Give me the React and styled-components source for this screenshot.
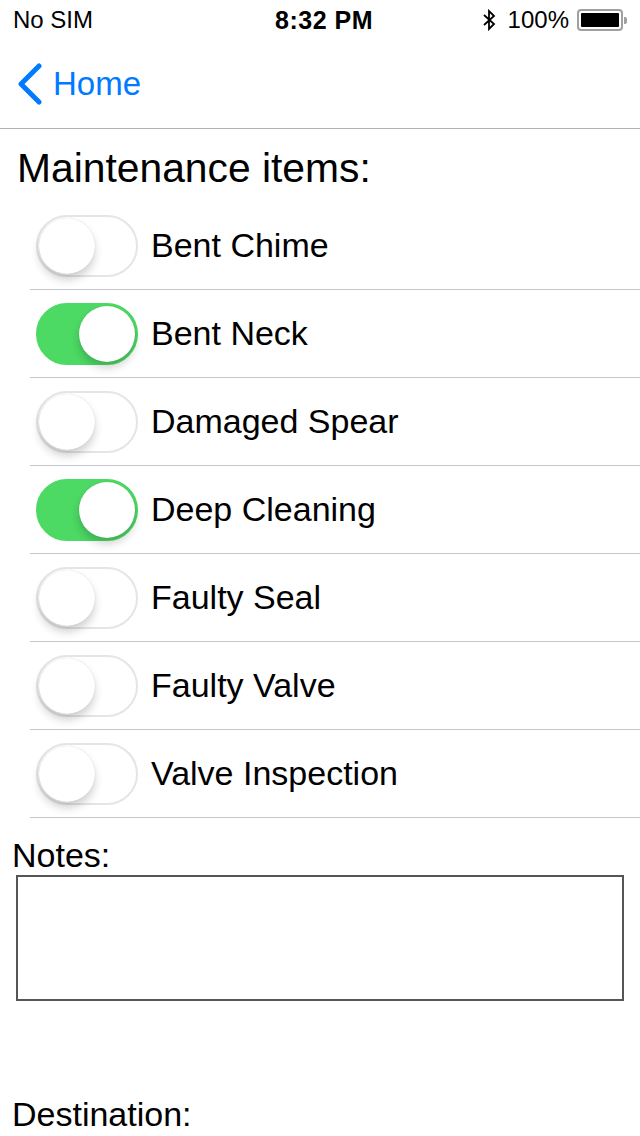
import React, { useState } from 'react';
import styled, { createGlobalStyle } from 'styled-components';

const GlobalStyle = createGlobalStyle`
  html, body {
    margin: 0;
    padding: 0;
    background: #fff;
    font-family: "Liberation Sans", Arial, sans-serif;
    color: #000;
  }
`;

const Screen = styled.div`
  width: 640px;
  height: 1136px;
  overflow: hidden;
  background: #fff;
`;

const StatusBar = styled.div`
  height: 40px;
  padding: 0 13px;
  display: grid;
  grid-template-columns: 1fr auto 1fr;
  align-items: center;
  font-size: 24px;
`;

const Carrier = styled.span``;

const Clock = styled.span`
  font-weight: bold;
  font-size: 25px;
  letter-spacing: 0.5px;
  margin-left: 8px;
`;

const StatusRight = styled.div`
  display: flex;
  align-items: center;
  justify-content: flex-end;
  gap: 8px;
`;

const Percent = styled.span`
  margin-left: 4px;
`;

const Battery = styled.div`
  display: flex;
  align-items: center;
`;

const BatteryBody = styled.div`
  width: 46px;
  height: 22px;
  border: 2px solid #a0a0a0;
  border-radius: 4px;
  padding: 2px;
  box-sizing: border-box;

  &::after {
    content: '';
    display: block;
    width: 100%;
    height: 100%;
    background: #000;
    border-radius: 1px;
  }
`;

const BatteryNub = styled.div`
  width: 3px;
  height: 7px;
  background: #a0a0a0;
  border-radius: 0 2px 2px 0;
  margin-left: 1px;
`;

const NavBar = styled.div`
  height: 88px;
  border-bottom: 1px solid #b2b2b2;
  display: flex;
  align-items: center;
  padding-left: 17px;
`;

const BackButton = styled.button`
  display: flex;
  align-items: center;
  gap: 10px;
  background: none;
  border: none;
  padding: 0;
  color: #007aff;
  font-family: inherit;
  font-size: 33px;
  cursor: pointer;
`;

const Heading = styled.h1`
  margin: 0;
  padding: 16px 0 0 17px;
  height: 73px;
  box-sizing: border-box;
  font-size: 40.8px;
  font-weight: normal;
  line-height: 46px;
`;

const List = styled.div`
  margin-left: 30px;
`;

const Row = styled.label`
  height: 88px;
  box-sizing: border-box;
  border-bottom: 1px solid #c8c7cc;
  display: flex;
  align-items: center;
  padding-left: 6px;
  gap: 13px;
  font-size: 34px;
  cursor: pointer;
`;

const Track = styled.span`
  position: relative;
  flex: none;
  width: 102px;
  height: 62px;
  border-radius: 31px;
  box-sizing: border-box;
  background: ${(p) => (p.$on ? '#4cd964' : '#fff')};
  border: 2px solid ${(p) => (p.$on ? '#4cd964' : '#e5e5e5')};
`;

const Knob = styled.span`
  position: absolute;
  top: 1px;
  left: ${(p) => (p.$on ? '41px' : '1px')};
  width: 56px;
  height: 56px;
  border-radius: 50%;
  background: #fff;
  box-shadow: 0 6px 8px rgba(0, 0, 0, 0.18), 0 0 1px rgba(0, 0, 0, 0.2);
`;

const Section = styled.div`
  padding: 0 16px;
`;

const FieldLabel = styled.div`
  font-size: 34px;
  line-height: 38px;
  margin-left: -4px;
  padding-top: ${(p) => p.$top}px;
`;

const Notes = styled.textarea`
  display: block;
  width: 100%;
  height: 126px;
  margin-top: 1px;
  box-sizing: border-box;
  border: 2px solid #555;
  resize: none;
  font-family: inherit;
  font-size: 28px;
  outline: none;
`;

const items = [
  ['Bent Chime', false],
  ['Bent Neck', true],
  ['Damaged Spear', false],
  ['Deep Cleaning', true],
  ['Faulty Seal', false],
  ['Faulty Valve', false],
  ['Valve Inspection', false],
];

const Toggle = ({ on }) => (
  <Track $on={on}>
    <Knob $on={on} />
  </Track>
);

export default function App() {
  const [state, setState] = useState(items.map((i) => i[1]));

  const flip = (idx) => {
    const next = [...state];
    next[idx] = !next[idx];
    setState(next);
  };

  return (
    <Screen>
      <GlobalStyle />
      <StatusBar>
        <Carrier>No SIM</Carrier>
        <Clock>8:32 PM</Clock>
        <StatusRight>
          <svg width="14" height="22" viewBox="0 0 14 22" fill="none" stroke="#000" strokeWidth="1.8">
            <path d="M2 6 L12 15 L7 20 L7 2 L12 7 L2 16" />
          </svg>
          <Percent>100%</Percent>
          <Battery>
            <BatteryBody />
            <BatteryNub />
          </Battery>
        </StatusRight>
      </StatusBar>

      <NavBar>
        <BackButton>
          <svg width="26" height="42" viewBox="0 0 26 42" fill="none" stroke="#007aff" strokeWidth="5" strokeLinecap="round" strokeLinejoin="round">
            <path d="M22 3 L4 21 L22 39" />
          </svg>
          Home
        </BackButton>
      </NavBar>

      <Heading>Maintenance items:</Heading>

      <List>
        {items.map(([name], idx) => (
          <Row key={name} onClick={() => flip(idx)}>
            <Toggle on={state[idx]} />
            {name}
          </Row>
        ))}
      </List>

      <Section>
        <FieldLabel $top={18}>Notes:</FieldLabel>
        <Notes />
        <FieldLabel $top={94}>Destination:</FieldLabel>
      </Section>
    </Screen>
  );
}
